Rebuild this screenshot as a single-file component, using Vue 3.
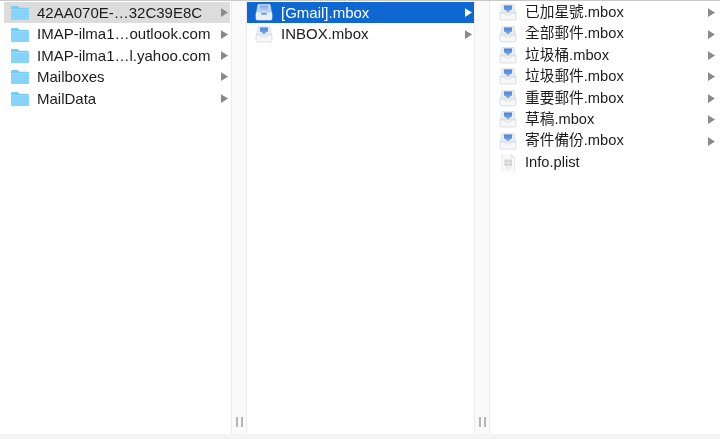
<script setup>
const columns = [
  {
    name: 'one',
    icon: 'folder',
    rows: [
      { label: '42AA070E-…32C39E8C', arrow: true, state: 'muted' },
      { label: 'IMAP-ilma1…outlook.com', arrow: true },
      { label: 'IMAP-ilma1…l.yahoo.com', arrow: true },
      { label: 'Mailboxes', arrow: true },
      { label: 'MailData', arrow: true },
    ],
  },
  {
    name: 'two',
    icon: 'mbox',
    rows: [
      { label: '[Gmail].mbox', arrow: true, state: 'active' },
      { label: 'INBOX.mbox', arrow: true },
    ],
  },
  {
    name: 'three',
    icon: 'mbox',
    rows: [
      { label: '已加星號.mbox', arrow: true },
      { label: '全部郵件.mbox', arrow: true },
      { label: '垃圾桶.mbox', arrow: true },
      { label: '垃圾郵件.mbox', arrow: true },
      { label: '重要郵件.mbox', arrow: true },
      { label: '草稿.mbox', arrow: true },
      { label: '寄件備份.mbox', arrow: true },
      { label: 'Info.plist', arrow: false, file: true },
    ],
  },
]
</script>

<template>
  <div class="browser">
    <svg class="defs" width="0" height="0">
      <defs>
        <linearGradient id="markFade" x1="0" y1="0" x2="0" y2="1">
          <stop offset="0" stop-color="#4a82d6" />
          <stop offset="0.6" stop-color="#6d9ee2" />
          <stop offset="1" stop-color="#c3d6f0" />
        </linearGradient>
        <linearGradient id="markFadeActive" x1="0" y1="0" x2="0" y2="1">
          <stop offset="0" stop-color="#7fa9e6" />
          <stop offset="1" stop-color="#d6e3f5" />
        </linearGradient>
      </defs>
    </svg>
    <div class="columns">
      <section v-for="col in columns" :key="col.name" class="col" :class="col.name">
        <div class="list">
          <div v-for="row in col.rows" :key="row.label" class="row" :class="row.state">
            <svg v-if="col.icon === 'folder'" class="icon" viewBox="0 0 20 17">
              <path d="M1 3.500C1 2.500 1.600 2 2.600 2H7c.8 0 1.100.3 1.600.8l.9.9h7.900c1 0 1.600.6 1.600 1.600v9.100c0 1-.6 1.600-1.600 1.600H2.600c-1 0-1.600-.6-1.600-1.600Z" fill="#74cbf8" />
              <path d="M1 5.600h18v8.700c0 1-.6 1.600-1.600 1.600H2.600c-1 0-1.600-.6-1.600-1.600Z" fill="#86d4fb" />
              <path d="M1 5.300h18v.6H1Z" fill="#a9e1fc" />
            </svg>
            <svg v-else-if="row.file" class="icon" viewBox="0 0 20 17">
              <path d="M4 -.5h8.500L16.500 3.500V17H4Z" fill="#f9f9f9" stroke="#e2e2e2" stroke-width=".7" />
              <path d="M12.500-.5V3.500h4Z" fill="#e8e8e8" />
              <rect x="6.500" y="5.500" width="7.500" height="6.500" fill="#d2d2d2" />
              <path d="M10.200 5.500v6.500M6.500 8.700h7.500" stroke="#f0f0f0" stroke-width=".7" />
              <rect x="7.500" y="13.500" width="5.500" height="1" fill="#dcdcdc" />
            </svg>
            <svg v-else class="icon" viewBox="0 0 20 17">
              <path class="back" d="M4 .5h12l1.500 8.500h-15Z" />
              <path class="mark" d="M6 1.600h8v4.200h-1.200L10 9.200 7.200 5.800H6Z" />
              <path class="tray" d="M2 9h4.500l.9 1.800h5.200l.9-1.800H18v5.500c0 1-.5 1.500-1.500 1.500h-13c-1 0-1.500-.5-1.500-1.500Z" />
            </svg>
            <span class="label">{{ row.label }}</span>
            <svg v-if="row.arrow" class="arrow" viewBox="0 0 8 10">
              <path d="M0 0 8 5 0 10Z" />
            </svg>
          </div>
        </div>
        <div class="grip"><i></i><i></i></div>
      </section>
    </div>
  </div>
</template>

<style>
html, body { margin: 0; background: #fff; }
</style>

<style scoped>
.browser {
  width: 720px;
  height: 439px;
  box-sizing: border-box;
  border-top: 1px solid #c9c9c9;
  border-bottom: 5px solid #f3f3f3;
  background: #fff;
  overflow: hidden;
  font-family: "Liberation Sans", "Noto Sans CJK TC", sans-serif;
  font-size: 15px;
  line-height: 21.4px;
  color: #1c1c1c;
  filter: blur(0.4px);
}
.defs { position: absolute; }
.columns {
  display: flex;
  height: 100%;
}
.col {
  display: flex;
  min-width: 0;
}
.one { width: 247px; }
.two { width: 243px; }
.three { width: 230px; font-size: 14.7px; }
.three .grip { display: none; }
.list {
  flex: 1;
  min-width: 0;
  padding-top: 1px;
}
.one .list { padding-left: 4px; padding-right: 1px; }
.row {
  display: flex;
  align-items: center;
  height: 21.4px;
  padding-left: 6px;
  padding-right: 2px;
}
.two .row { padding-left: 7px; }
.three .row { padding-left: 8px; padding-right: 5px; }
.icon {
  width: 20px;
  height: 17px;
  flex: none;
}
.back { fill: #e9edf4; stroke: #d2d6dc; stroke-width: 0.6; }
.mark { fill: url(#markFade); }
.tray { fill: #f7f7f9; stroke: #c8ccd2; stroke-width: 0.6; }
.active .back { fill: #b9d2f2; stroke: #eef3fa; }
.active .mark { fill: url(#markFadeActive); }
.active .tray { fill: #e9eff8; stroke: #f4f7fb; }
.label {
  flex: 1;
  margin-left: 7px;
  white-space: nowrap;
}
.arrow {
  width: 7px;
  height: 9px;
  flex: none;
  fill: #8a8a8a;
}
.muted { background: #dcdcdc; }
.active { background: #0f67d2; color: #fff; }
.active .arrow { fill: #fff; }
.grip {
  width: 16px;
  flex: none;
  box-sizing: border-box;
  display: flex;
  justify-content: center;
  align-items: flex-end;
  gap: 3px;
  padding-bottom: 7px;
  background: #fafafa;
  border-left: 1px solid #ececec;
  border-right: 1px solid #ececec;
}
.grip i {
  display: block;
  width: 2px;
  height: 10px;
  background: #b5b5b5;
}
</style>
